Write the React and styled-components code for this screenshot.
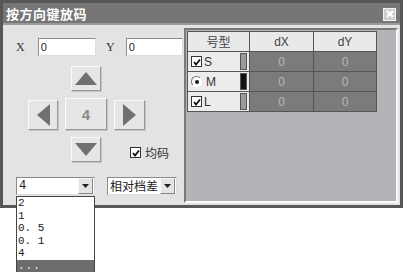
import React from 'react'
import styled, { createGlobalStyle } from 'styled-components'

const Global = createGlobalStyle`
  body {
    margin: 0;
    background: #fff;
    font-family: "Noto Sans CJK SC", "Liberation Sans", sans-serif;
  }
`

const Page = styled.div`
  width: 407px;
  height: 272px;
  position: relative;
`

const Window = styled.div`
  width: 397px;
  height: 202px;
  border: 3px solid #575757;
  background: #e3e3e3;
  display: flex;
  flex-direction: column;
`

const TitleBar = styled.div`
  height: 20px;
  background: #767676;
  display: flex;
  align-items: center;
  justify-content: space-between;
  padding: 0 4px 0 3px;
  border-bottom: 2px solid #9a9a9a;
`

const Title = styled.span`
  color: #fff;
  font-weight: bold;
  font-size: 13px;
  letter-spacing: 0.5px;
`

const CloseBtn = styled.div`
  width: 11px;
  height: 11px;
  background: #cfcfcf;
  border: 1px solid #f4f4f4;
  display: flex;
  align-items: center;
  justify-content: center;
  margin-top: 2px;
`

const Body = styled.div`
  flex: 1;
  display: flex;
  padding: 3px 2px 2px 0;
`

const LeftPanel = styled.div`
  width: 180px;
  display: flex;
  flex-direction: column;
`

const FieldRow = styled.div`
  display: flex;
  align-items: center;
  margin-top: 10px;
  padding-left: 13px;
  height: 18px;
`

const Label = styled.span`
  font-family: "Liberation Serif", serif;
  font-size: 12px;
  color: #333;
  width: ${p => p.w}px;
`

const TextInput = styled.div`
  width: ${p => p.w}px;
  height: 16px;
  background: #fff;
  border: 1px solid #8a8a8a;
  border-right-color: #ddd;
  border-bottom-color: #ddd;
  font-family: "Liberation Sans", sans-serif;
  font-size: 11px;
  line-height: 16px;
  padding-left: 2px;
  margin-right: ${p => p.mr || 0}px;
  color: #222;
`

const Pad = styled.div`
  display: grid;
  grid-template-columns: 30px 42px 31px 50px;
  grid-template-rows: 25px 32px 25px;
  column-gap: 7px;
  row-gap: 7px;
  margin: 10px 0 0 25px;
`

const KeyBtn = styled.div`
  grid-column: ${p => p.col};
  grid-row: ${p => p.row};
  align-self: ${p => p.align || 'stretch'};
  height: ${p => p.h || 'auto'};
  margin: ${p => p.narrow ? '0 6px' : '0'};
  background: #e6e6e6;
  border: 1px solid #fafafa;
  border-right-color: #9a9a9a;
  border-bottom-color: #9a9a9a;
  box-shadow: 1px 1px 0 #c4c4c4;
  display: flex;
  align-items: center;
  justify-content: center;
  color: #8a8a8a;
  font-weight: bold;
  font-size: 15px;
  font-family: "Liberation Sans", sans-serif;
`

const Check = styled.label`
  grid-column: 3 / 5;
  grid-row: 3;
  align-self: center;
  padding-left: 16px;
  display: flex;
  align-items: center;
  gap: 4px;
  font-size: 12px;
  color: #333;
  margin-top: 6px;
`

const Box = styled.span`
  width: 9px;
  height: 9px;
  background: #fff;
  border: 1px solid #333;
  display: inline-flex;
  align-items: center;
  justify-content: center;
  flex-shrink: 0;
`

const ComboRow = styled.div`
  display: flex;
  gap: 12px;
  margin: 15px 0 0 13px;
`

const ComboWrap = styled.div`
  position: relative;
`

const Combo = styled.div`
  width: ${p => p.w}px;
  height: 16px;
  background: #fff;
  border: 1px solid #8a8a8a;
  border-right-color: #ddd;
  border-bottom-color: #ddd;
  display: flex;
  align-items: center;
`

const ComboText = styled.span`
  flex: 1;
  padding-left: 2px;
  font-size: 12px;
  white-space: nowrap;
  overflow: hidden;
  font-family: ${p => p.mono ? '"Liberation Mono", monospace' : '"Noto Sans CJK SC", sans-serif'};
  color: #222;
  line-height: 16px;
`

const DropBtn = styled.span`
  width: 13px;
  height: 14px;
  flex-shrink: 0;
  background: #e4e4e4;
  border: 1px solid #f8f8f8;
  border-right-color: #888;
  border-bottom-color: #888;
  display: flex;
  align-items: center;
  justify-content: center;
  margin-right: 1px;
`

const DropList = styled.div`
  position: absolute;
  left: 0;
  top: 19px;
  width: 77px;
  background: #fff;
  border: 1px solid #444;
`

const DropItem = styled.div`
  height: 12.5px;
  line-height: 12.5px;
  padding-left: 1px;
  font-family: "Liberation Mono", monospace;
  font-size: 11px;
  color: ${p => p.sel ? '#fff' : '#222'};
  background: ${p => p.sel ? '#6c6c6c' : 'transparent'};
  letter-spacing: ${p => p.sel ? '1px' : '0'};
`

const RightPanel = styled.div`
  flex: 1;
  background: #b3b4b7;
  border: 2px solid;
  border-color: #7a7a7a #fafafa #fafafa #7a7a7a;
  padding: 1px 0 0 1px;
  margin-left: 1px;
`

const Table = styled.div`
  display: grid;
  grid-template-columns: 62px 64px 63px;
  grid-auto-rows: 20px;
  width: fit-content;
  border-top: 1px solid #555;
  border-left: 1px solid #555;
`

const HeadCell = styled.div`
  background: #e9e9e9;
  border-right: 1px solid #555;
  border-bottom: 1px solid #555;
  display: flex;
  align-items: center;
  justify-content: center;
  font-size: 12px;
  color: #444;
  font-family: ${p => p.cjk ? '"Noto Sans CJK KR", sans-serif' : '"Liberation Sans", sans-serif'};
`

const NameCell = styled.div`
  background: #ececec;
  border-right: 1px solid #555;
  border-bottom: 1px solid #555;
  display: flex;
  align-items: center;
  padding: 0 2px 0 3px;
  gap: 2px;
  font-family: "Liberation Sans", sans-serif;
  font-size: 12px;
  color: #333;
`

const Swatch = styled.span`
  margin-left: auto;
  width: 5px;
  height: 15px;
  border: 1px solid #555;
  background: ${p => p.c};
`

const ValCell = styled.div`
  background: #7b7b7b;
  border-right: 1px solid #555;
  border-bottom: 1px solid #555;
  display: flex;
  align-items: center;
  justify-content: center;
  font-family: "Liberation Sans", sans-serif;
  font-size: 12px;
  color: #b9b9b9;
`

const Radio = styled.span`
  width: 9px;
  height: 9px;
  border-radius: 50%;
  background: #fff;
  border: 1px solid;
  border-color: #777 #fff #fff #777;
  display: inline-flex;
  align-items: center;
  justify-content: center;
  margin-right: 2px;
`

const Tick = () => (
  <svg width="8" height="8" viewBox="0 0 8 8">
    <path d="M1 4 L3 6.5 L7 1.5" stroke="#111" strokeWidth="1.8" fill="none" />
  </svg>
)

const Arrow = ({ dir }) => {
  const pts = {
    up: '0,13 11,0 22,13',
    down: '0,0 22,0 11,13',
    left: '13,0 13,22 0,11',
    right: '0,0 0,22 13,11',
  }[dir]
  const vert = dir === 'up' || dir === 'down'
  return (
    <svg width={vert ? 22 : 13} height={vert ? 13 : 22}>
      <polygon points={pts} fill="#707070" />
    </svg>
  )
}

const Caret = () => (
  <svg width="7" height="4" viewBox="0 0 7 4">
    <polygon points="0,0 7,0 3.5,4" fill="#222" />
  </svg>
)

const rows = [
  { name: 'S', kind: 'check', swatch: '#9a9a9a' },
  { name: 'M', kind: 'radio', swatch: '#111' },
  { name: 'L', kind: 'check', swatch: '#9a9a9a' },
]

export default function App() {
  return (
    <Page>
      <Global />
      <Window>
        <TitleBar>
          <Title>按方向键放码</Title>
          <CloseBtn>
            <svg width="8" height="8" viewBox="0 0 8 8">
              <path d="M1 1 L7 7 M7 1 L1 7" stroke="#fff" strokeWidth="2" />
            </svg>
          </CloseBtn>
        </TitleBar>
        <Body>
          <LeftPanel>
            <FieldRow>
              <Label w={22}>X</Label>
              <TextInput w={55} mr={10}>0</TextInput>
              <Label w={20}>Y</Label>
              <TextInput w={54}>0</TextInput>
            </FieldRow>
            <Pad>
              <KeyBtn col={2} row={1} narrow><Arrow dir="up" /></KeyBtn>
              <KeyBtn col={1} row={2} align="end" h="28px"><Arrow dir="left" /></KeyBtn>
              <KeyBtn col={2} row={2}>4</KeyBtn>
              <KeyBtn col={3} row={2} align="end" h="28px"><Arrow dir="right" /></KeyBtn>
              <KeyBtn col={2} row={3} narrow><Arrow dir="down" /></KeyBtn>
              <Check>
                <Box><Tick /></Box>
                均码
              </Check>
            </Pad>
            <ComboRow>
              <ComboWrap>
                <Combo w={77}>
                  <ComboText mono>4</ComboText>
                  <DropBtn><Caret /></DropBtn>
                </Combo>
                <DropList>
                  <DropItem>2</DropItem>
                  <DropItem>1</DropItem>
                  <DropItem>0. 5</DropItem>
                  <DropItem>0. 1</DropItem>
                  <DropItem>4</DropItem>
                  <DropItem sel>...</DropItem>
                </DropList>
              </ComboWrap>
              <ComboWrap>
                <Combo w={68}>
                  <ComboText>相对档差</ComboText>
                  <DropBtn><Caret /></DropBtn>
                </Combo>
              </ComboWrap>
            </ComboRow>
          </LeftPanel>
          <RightPanel>
            <Table>
              <HeadCell cjk>号型</HeadCell>
              <HeadCell>dX</HeadCell>
              <HeadCell>dY</HeadCell>
              {rows.map(r => (
                <React.Fragment key={r.name}>
                  <NameCell>
                    {r.kind === 'check'
                      ? <Box><Tick /></Box>
                      : <Radio><svg width="4" height="4"><circle cx="2" cy="2" r="2" fill="#111" /></svg></Radio>}
                    {r.name}
                    <Swatch c={r.swatch} />
                  </NameCell>
                  <ValCell>0</ValCell>
                  <ValCell>0</ValCell>
                </React.Fragment>
              ))}
            </Table>
          </RightPanel>
        </Body>
      </Window>
    </Page>
  )
}
